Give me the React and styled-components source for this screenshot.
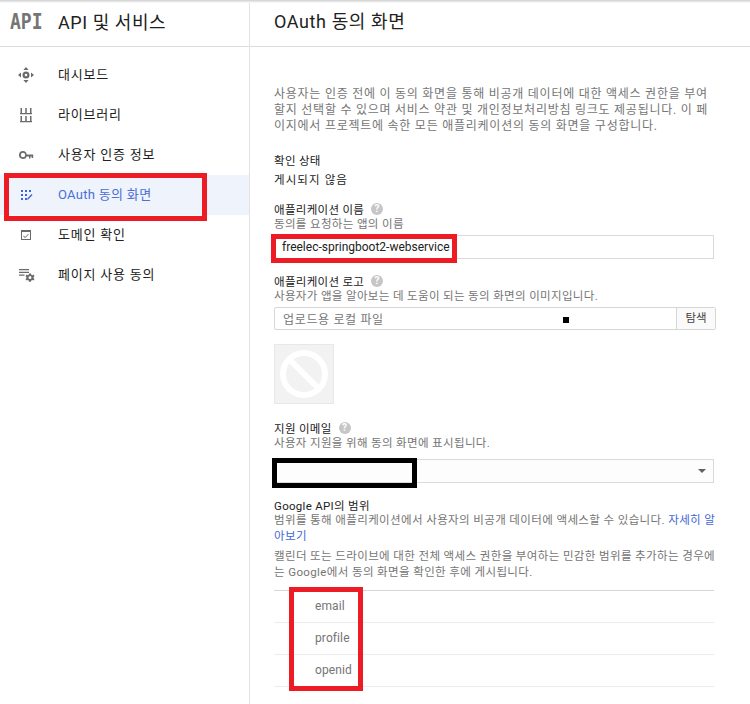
import React from "react";
import styled, { createGlobalStyle } from "styled-components";

const Global = createGlobalStyle`
  html, body { margin: 0; padding: 0; background: #fff; }
  body { font-family: Roboto, "Noto Sans CJK KR", sans-serif; overflow: hidden; }
  * { box-sizing: border-box; }
`;

const Page = styled.div`
  position: relative; width: 750px; height: 704px; overflow: hidden; display: flex; background: #fff;
  &::before { content: ""; position: absolute; left: 0; right: 0; top: 0; height: 3px;
    background: linear-gradient(#cfcfcf, #fff); }
`;
const Side = styled.aside`
  width: 250px; flex: none; height: 100%; border-right: 1px solid #e3e3e3;
`;
const SideHead = styled.div`
  height: 47px; display: flex; align-items: center; padding: 0 0 4px 10px; gap: 13px; border-bottom: 1px solid #dcdcdc;
`;
const Brand = styled.span`
  font: bold 22px/1 "DejaVu Sans Mono", monospace; color: #757575; width: 35px; padding-top: 2px;
  transform: scaleX(0.82); transform-origin: left center;
`;
const SideTitle = styled.span`
  font-size: 18px; color: #212121; letter-spacing: 0.55px;
`;
const Nav = styled.nav`
  padding-top: 8px;
`;
const NavItem = styled.div`
  height: 40px; display: flex; align-items: center; padding: 0 0 4px 17px; gap: 23px; font-size: 13px;
  letter-spacing: ${p => (p.$active ? "0.3px" : "0.8px")};
  background: ${p => (p.$active ? "#eff3fc" : "transparent")};
  color: ${p => (p.$active ? "#4a6fd8" : "#212121")};
`;
const Ic = styled.svg`
  width: 18px; height: 18px; flex: none; margin-top: 4px; fill: ${p => p.$c || "#6b6b6b"};
`;
const Main = styled.main`
  flex: 1; min-width: 0;
`;
const MainHead = styled.div`
  height: 47px; display: flex; align-items: center; padding: 0 0 6px 24px; font-size: 18px; color: #212121;
  border-bottom: 1px solid #dcdcdc; letter-spacing: 0.6px;
`;
const Body = styled.div`
  padding: 39px 35px 0 24px; font-size: 11.5px; color: #757575;
`;
const Intro = styled.p`
  margin: 0; line-height: 16px; color: #757575; font-size: 12px; letter-spacing: 0.75px; width: 441px;
`;
const Para = styled.p`
  margin: 0; line-height: 16px; color: #757575; letter-spacing: 0.38px; width: 445px;
  & + & { margin-top: 4px; }
`;
const Status = styled.div`
  margin-top: 18px; line-height: 19px; color: #212121; font-size: 11.5px; letter-spacing: 0.3px;
`;
const Value = styled.span`
  letter-spacing: 1.1px;
`;
const Label = styled.div`
  margin-top: ${p => p.$mt || 16}px; display: flex; align-items: center; gap: 7px; height: 14px; color: #212121;
  font-size: 11.5px; letter-spacing: 0.3px;
`;
const Help = styled.span`
  width: 12px; height: 12px; border-radius: 50%; background: #c6c6c6; color: #fff; font: bold 10px/12px Roboto, sans-serif; text-align: center;
`;
const Hint = styled.div`
  line-height: 14px; height: 14px; padding-top: 1px; color: #757575; font-size: 11.5px; letter-spacing: 0.35px;
`;
const Field = styled.div`
  margin-top: ${p => p.$mt || 5}px; width: 440px; height: 24px; border: 1px solid #dadada; display: flex; align-items: center;
  padding: 0 7px; font-size: 12px; color: #212121;
`;
const FileRow = styled.div`
  margin-top: 5px; width: 442px; height: 23px; border: 1px solid #d6d6d6; border-radius: 2px; display: flex; align-items: stretch;
`;
const FileText = styled.div`
  flex: 1; padding-left: 8px; line-height: 24px; font-size: 12px; color: #757575; letter-spacing: 0.65px; position: relative;
`;
const Dot = styled.span`
  position: absolute; left: 288px; top: 9px; width: 6px; height: 6px; background: #000;
`;
const Browse = styled.div`
  width: 39px; border-left: 1px solid #d6d6d6; text-align: center; line-height: 21px; font-size: 11.5px; color: #424242; background: #fafafa;
`;
const Thumb = styled.div`
  margin-top: 14px; width: 60px; height: 60px; background: #f2f2f2; border: 1px solid #e8e8e8; display: flex; align-items: center; justify-content: center;
`;
const Select = styled(Field)`
  justify-content: flex-end; padding-right: 7px; background: #fdfdfd;
`;
const Caret = styled.span`
  width: 0; height: 0; border-left: 4px solid transparent; border-right: 4px solid transparent; border-top: 4px solid #616161;
`;
const Link = styled.span`
  color: #3f66d8;
`;
const ScopeList = styled.div`
  margin-top: 10px; width: 440px; border-top: 1px solid #d6d6d6;
`;
const Scope = styled.div`
  height: 32px; border-bottom: 1px solid #ececec; padding: 0 0 2px 41px; display: flex; align-items: center; font-size: 12px;
  color: #757575; letter-spacing: 0.1px;
`;
const Mark = styled.div`
  position: absolute; left: ${p => p.$x}px; top: ${p => p.$y}px; width: ${p => p.$w}px; height: ${p => p.$h}px;
  border: 5px solid ${p => p.$c || "#ed1c24"}; pointer-events: none;
`;

const Dash = () => (
  <Ic viewBox="0 0 18 18"><path d="M9 1l2.600 3H6.400zM9 17l-2.600-3h5.200zM1 9l3-2.600v5.200zM17 9l-3 2.600V6.400z"/><path fillRule="evenodd" d="M9 5.500a3.500 3.500 0 1 0 0 7 3.500 3.500 0 0 0 0-7zm0 2.200a1.300 1.300 0 1 1 0 2.600 1.300 1.300 0 0 1 0-2.600z"/></Ic>
);
const Lib = () => (
  <Ic viewBox="0 0 18 18"><path d="M3.500 2H5v5H3.500zM8.250 2h1.500v5h-1.500zM13 2h1.500v5H13zM3 7h12v1.200H3zM3.500 10H5v5H3.500zM8.250 10h1.500v5h-1.500zM13 10h1.500v5H13zM3 15h12v1.200H3z"/></Ic>
);
const Key = () => (
  <Ic viewBox="0 0 18 18"><path fillRule="evenodd" d="M6 5a4 4 0 1 0 3.700 5.500H12v2h1.500v-2h1.200v1.500H16.200V8.500H9.700A4 4 0 0 0 6 5zm0 1.800a2.200 2.200 0 1 1 0 4.400 2.200 2.200 0 0 1 0-4.400z"/></Ic>
);
const Consent = () => (
  <Ic viewBox="0 0 18 18" $c="#3f66d8"><path d="M4 4h2v2H4zM8 4h2v2H8zM12 4h2v2h-2zM4 8h2v2H4zM8 8h2v2H8zM4 12h2v2H4zM8 12h2v2H8zM10.500 12.300l4-4.300 1 1-4 4.300-1.500.500z"/></Ic>
);
const Verify = () => (
  <Ic viewBox="0 0 18 18"><path fillRule="evenodd" d="M4 4h10v10H4zm1 2v7h8V6z"/><path d="M6.800 9.600l1.300 1.300 3-3 .6.600-3.600 3.600-1.900-1.900z"/></Ic>
);
const Usage = () => (
  <Ic viewBox="0 0 18 18"><path d="M2 3h10v1.200H2zM2 5.800h10V7H2zM2 8.600h5.500v1.200H2z"/><path fillRule="evenodd" d="M12 7.500h2l.3 1.200 1.100.5 1.100-.6 1 1.600-.9.800v1.200l.9.800-1 1.600-1.100-.6-1.100.5-.3 1.200h-2l-.3-1.200-1.100-.5-1.100.6-1-1.600.9-.8v-1.200l-.9-.8 1-1.600 1.100.6 1.100-.5zm1 2.500a1.500 1.500 0 1 0 0 3 1.500 1.500 0 0 0 0-3z"/></Ic>
);

const items = [
  [Dash, "대시보드"],
  [Lib, "라이브러리"],
  [Key, "사용자 인증 정보"],
  [Consent, "OAuth 동의 화면", true],
  [Verify, "도메인 확인"],
  [Usage, "페이지 사용 동의"],
];

export default function App() {
  return (
    <Page>
      <Global />
      <Side>
        <SideHead><Brand>API</Brand><SideTitle>API 및 서비스</SideTitle></SideHead>
        <Nav>
          {items.map(([I, t, a]) => (
            <NavItem key={t} $active={a}><I />{t}</NavItem>
          ))}
        </Nav>
      </Side>
      <Main>
        <MainHead>OAuth 동의 화면</MainHead>
        <Body>
          <Intro>사용자는 인증 전에 이 동의 화면을 통해 비공개 데이터에 대한 액세스 권한을 부여할지 선택할 수 있으며 서비스 약관 및 개인정보처리방침 링크도 제공됩니다. 이 페이지에서 프로젝트에 속한 모든 애플리케이션의 동의 화면을 구성합니다.</Intro>
          <Status>확인 상태<br /><Value>게시되지 않음</Value></Status>
          <Label $mt={12}>애플리케이션 이름 <Help>?</Help></Label>
          <Hint>동의를 요청하는 앱의 이름</Hint>
          <Field>freelec-springboot2-webservice</Field>
          <Label $mt={15}>애플리케이션 로고 <Help>?</Help></Label>
          <Hint>사용자가 앱을 알아보는 데 도움이 되는 동의 화면의 이미지입니다.</Hint>
          <FileRow>
            <FileText>업로드용 로컬 파일<Dot /></FileText>
            <Browse>탐색</Browse>
          </FileRow>
          <Thumb>
            <svg width="50" height="50" viewBox="0 0 50 50" fill="none" stroke="#fff" strokeWidth="6">
              <circle cx="25" cy="25" r="21" />
              <path d="M10 10l30 30" />
            </svg>
          </Thumb>
          <Label $mt={17}>지원 이메일 <Help>?</Help></Label>
          <Hint>사용자 지원을 위해 동의 화면에 표시됩니다.</Hint>
          <Select $mt={10}><Caret /></Select>
          <Label $mt={15}>Google API의 범위</Label>
          <Para>범위를 통해 애플리케이션에서 사용자의 비공개 데이터에 액세스할 수 있습니다. <Link>자세히 알아보기</Link></Para>
          <Para>캘린더 또는 드라이브에 대한 전체 액세스 권한을 부여하는 민감한 범위를 추가하는 경우에는 Google에서 동의 화면을 확인한 후에 게시됩니다.</Para>
          <ScopeList>
            <Scope>email</Scope>
            <Scope>profile</Scope>
            <Scope>openid</Scope>
          </ScopeList>
        </Body>
      </Main>
      <Mark $x={4} $y={173} $w={203} $h={48} />
      <Mark $x={271} $y={234} $w={186} $h={29} />
      <Mark $x={272} $y={458} $w={145} $h={30} $c="#000" />
      <Mark $x={289} $y={587} $w={74} $h={104} />
    </Page>
  );
}
